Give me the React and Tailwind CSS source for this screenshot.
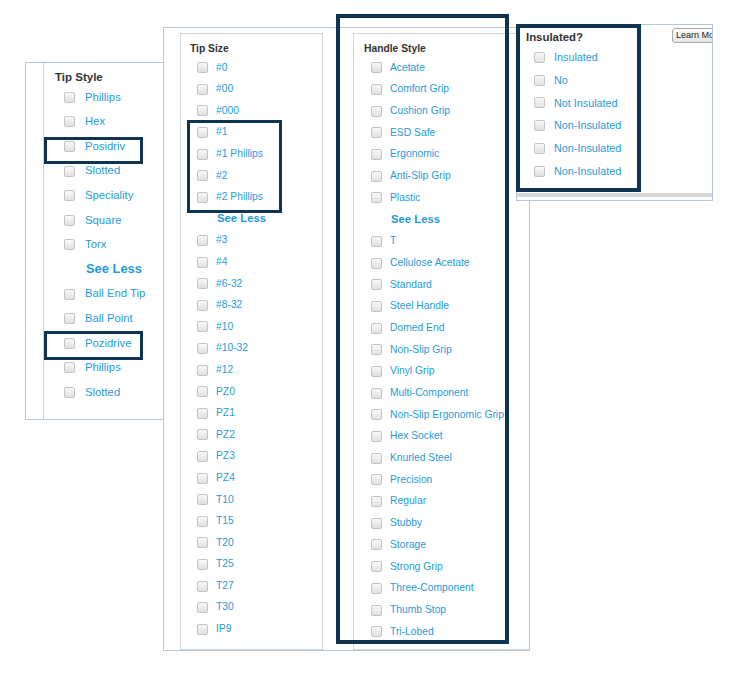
import React from "react";

const SEE = "__see_less__";

const tipStyles = [
  "Phillips", "Hex", "Posidriv", "Slotted", "Speciality", "Square", "Torx",
  SEE, "Ball End Tip", "Ball Point", "Pozidrive", "Phillips", "Slotted",
];

const tipSizes = [
  "#0", "#00", "#000", "#1", "#1 Phillips", "#2", "#2 Phillips", SEE,
  "#3", "#4", "#6-32", "#8-32", "#10", "#10-32", "#12", "PZ0", "PZ1", "PZ2",
  "PZ3", "PZ4", "T10", "T15", "T20", "T25", "T27", "T30", "IP9",
];

const handleStyles = [
  "Acetate", "Comfort Grip", "Cushion Grip", "ESD Safe", "Ergonomic",
  "Anti-Slip Grip", "Plastic", SEE, "T", "Cellulose Acetate", "Standard",
  "Steel Handle", "Domed End", "Non-Slip Grip", "Vinyl Grip",
  "Multi-Component", "Non-Slip Ergonomic Grip", "Hex Socket", "Knurled Steel",
  "Precision", "Regular", "Stubby", "Storage", "Strong Grip",
  "Three-Component", "Thumb Stop", "Tri-Lobed",
];

const insulated = [
  "Insulated", "No", "Not Insulated", "Non-Insulated", "Non-Insulated", "Non-Insulated",
];

function Check() {
  return (
    <span className="block w-[11px] h-[11px] shrink-0 rounded-[2px] border border-[#c4c4c4] bg-linear-to-b from-[#f8f8f8] to-[#e1e1e1]" />
  );
}

function TipStyleList() {
  return (
    <ul className="flex flex-col">
      {tipStyles.map((t, i) =>
        t === SEE ? (
          <li key={i} className="h-[24.6px] flex items-center pl-[42px] font-bold text-[12.9px] leading-none text-[#1f9bd7]">
            See Less
          </li>
        ) : (
          <li key={i} className="h-[24.6px] flex items-center pl-[20px] gap-[10px]">
            <Check />
            <span className="text-[11.3px] leading-none text-[#1f9bd7]">{t}</span>
          </li>
        )
      )}
    </ul>
  );
}

function TipSizeList() {
  return (
    <ul className="flex flex-col">
      {tipSizes.map((t, i) =>
        t === SEE ? (
          <li key={i} className="h-[21.6px] flex items-center pl-[36px] font-bold text-[11.3px] leading-none text-[#1f9bd7]">
            See Less
          </li>
        ) : (
          <li key={i} className="h-[21.6px] flex items-center pl-[16px] gap-[8px]">
            <Check />
            <span className="text-[10.3px] leading-none text-[#1f9bd7]">{t}</span>
          </li>
        )
      )}
    </ul>
  );
}

function HandleList() {
  return (
    <ul className="flex flex-col">
      {handleStyles.map((t, i) =>
        t === SEE ? (
          <li key={i} className="h-[21.7px] flex items-center pl-[37px] font-bold text-[11.3px] leading-none text-[#1f9bd7]">
            See Less
          </li>
        ) : (
          <li key={i} className="h-[21.7px] flex items-center pl-[17px] gap-[8px]">
            <Check />
            <span className="text-[10.3px] leading-none text-[#1f9bd7] whitespace-nowrap">{t}</span>
          </li>
        )
      )}
    </ul>
  );
}

function InsulatedList() {
  return (
    <ul className="flex flex-col">
      {insulated.map((t, i) => (
        <li key={i} className="h-[22.8px] flex items-center pl-[17px] gap-[9px]">
          <Check />
          <span className="text-[10.8px] leading-none text-[#1f9bd7]">{t}</span>
        </li>
      ))}
    </ul>
  );
}

export default function App() {
  return (
    <div
      className="relative w-[748px] h-[697px] overflow-hidden bg-white"
      style={{ fontFamily: '"Liberation Sans", Arial, sans-serif' }}
    >
      {/* Tip Style filter fragment */}
      <section className="absolute left-[25px] top-[62px] w-[150px] h-[358px] flex border border-[#b9c7d5] bg-white">
        <div className="w-[18px] shrink-0 border-r border-[#c9d3dd]" />
        <div className="flex-1 pt-[7px]">
          <h3 className="h-[15px] flex items-center pl-[11px] font-bold text-[11.5px] leading-none text-[#333]">
            Tip Style
          </h3>
          <TipStyleList />
        </div>
      </section>

      {/* Tip Size + Handle Style fragment */}
      <section className="absolute left-[163px] top-[27px] w-[367px] h-[624px] flex items-stretch pt-[5px] pl-[16px] border border-[#b9c7d5] bg-white">
        <div className="w-[143px] shrink-0 pt-[8px] border-l border-t border-r border-b border-[#cfd5dc]">
          <h3 className="h-[15px] flex items-center pl-[9px] font-bold text-[10.3px] leading-none text-[#333]">
            Tip Size
          </h3>
          <TipSizeList />
        </div>
        <div className="flex-1 ml-[30px] pt-[8px] border-l border-t border-b border-[#cfd5dc]">
          <h3 className="h-[15px] flex items-center pl-[10px] font-bold text-[10.3px] leading-none text-[#333]">
            Handle Style
          </h3>
          <HandleList />
        </div>
      </section>

      {/* Insulated filter fragment */}
      <section className="absolute left-[516px] top-[24px] w-[197px] h-[177px] overflow-hidden pt-[5px] border border-[#b9c7d5] bg-white">
        <h3 className="h-[16px] flex items-center pl-[9px] font-bold text-[11.4px] leading-none text-[#333]">
          Insulated?
        </h3>
        <InsulatedList />
        <button className="absolute left-[155px] top-[3px] h-[15px] px-[3px] flex items-center rounded-[3px] border border-[#a8a8a8] bg-linear-to-b from-white to-[#e4e4e4] text-[9px] leading-none text-[#222] whitespace-nowrap">
          Learn More
        </button>
        <div className="absolute left-0 right-0 top-[168px] h-[4px] bg-[#d6d6d6]" />
      </section>

      {/* Highlight outlines */}
      <div className="absolute left-[44px] top-[137px] w-[99px] h-[27px] border-[3px] border-[#0f3451]" />
      <div className="absolute left-[44px] top-[331px] w-[99px] h-[29px] border-[3px] border-[#0f3451]" />
      <div className="absolute left-[187px] top-[120px] w-[95px] h-[93px] border-[3px] border-[#0f3451]" />
      <div className="absolute left-[336px] top-[14px] w-[173px] h-[630px] border-[4px] border-[#0f3451]" />
      <div className="absolute left-[516px] top-[24px] w-[125px] h-[168px] border-[4px] border-[#0f3451]" />
    </div>
  );
}
